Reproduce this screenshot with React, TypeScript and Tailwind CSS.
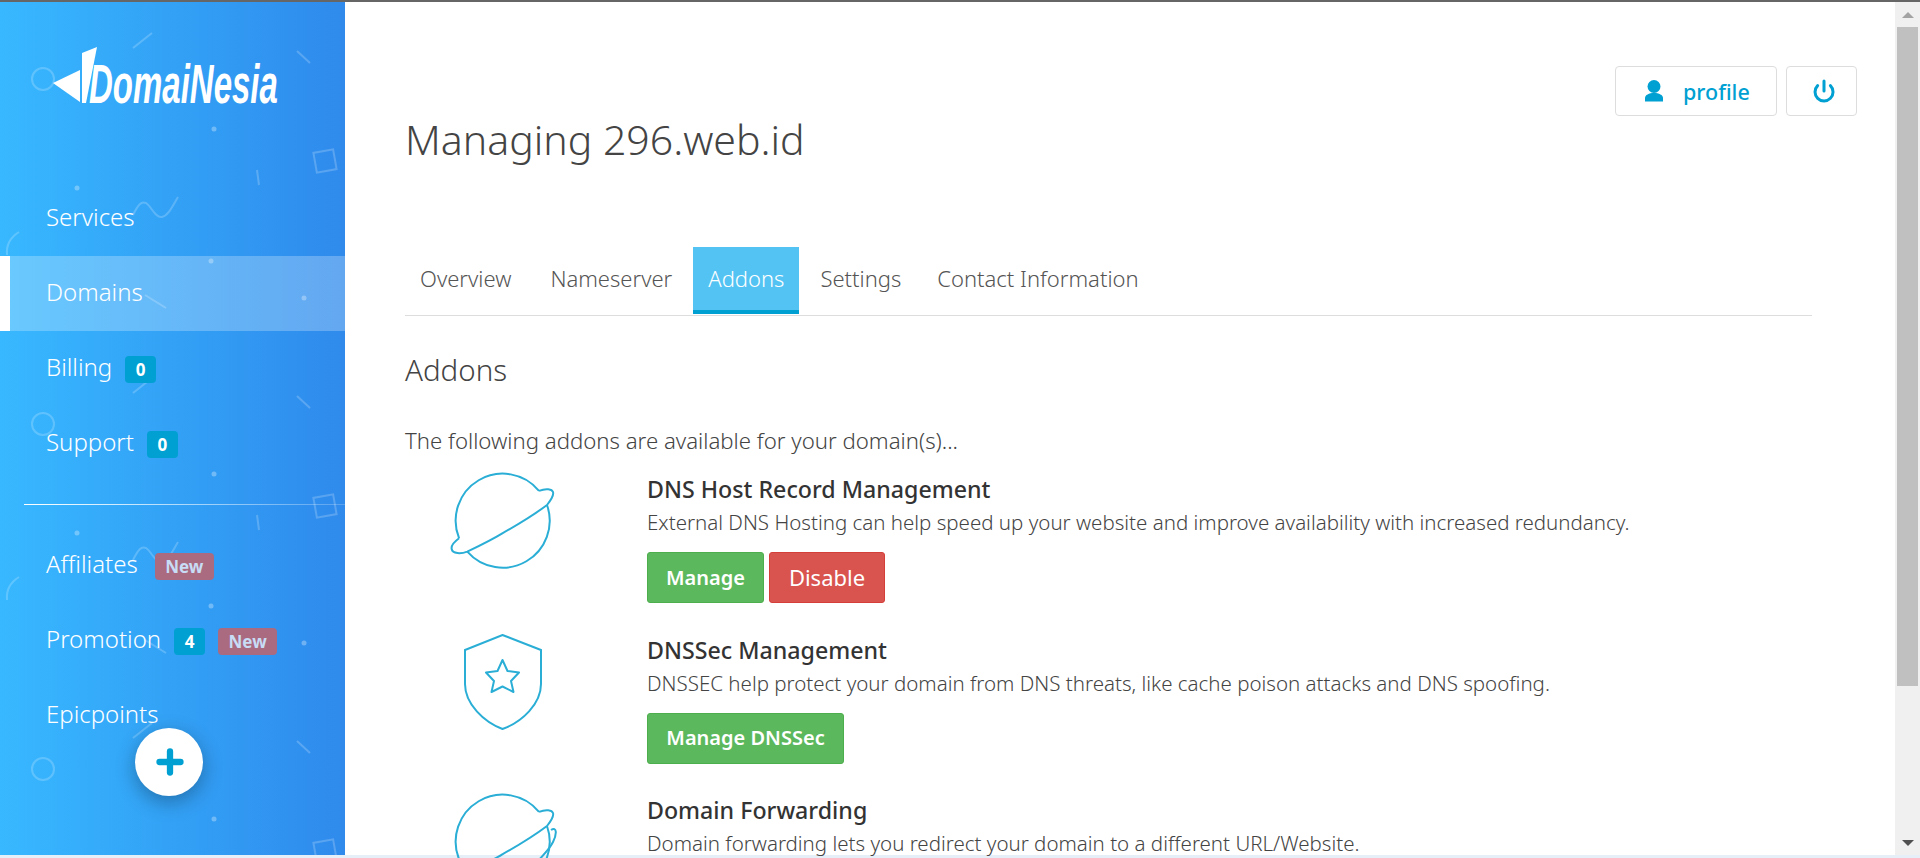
import { Plus, Power } from "lucide-react";

const font = { fontFamily: '"Noto Sans", sans-serif' };

function Badge({ children, red }: { children: string; red?: boolean }) {
  return (
    <span
      className={
        red
          ? "mt-[2px] flex h-[27px] w-[59px] items-center justify-center rounded-[4px] bg-[#aa6a80] text-[17px] font-bold text-[#c8dcf5]"
          : "mt-[2px] flex h-[27px] w-[31px] items-center justify-center rounded-[4px] bg-[#00a0d2] text-[17px] font-bold text-white"
      }
    >
      {children}
    </span>
  );
}

function NavItem({ label, active, badges }: { label: string; active?: boolean; badges?: { t: string; red?: boolean }[] }) {
  return (
    <div
      className={
        active
          ? "flex h-[75px] items-center gap-[13px] border-l-[10px] border-white bg-white/25 pl-[36px] text-[24px] font-light text-white"
          : "flex h-[75px] items-center gap-[13px] pl-[46px] text-[24px] font-light text-white"
      }
    >
      <span className={label === "Affiliates" ? "pb-[4px] pr-[4px]" : "pb-[4px]"}>{label}</span>
      {badges?.map((b) => (
        <Badge key={b.t} red={b.red}>
          {b.t}
        </Badge>
      ))}
    </div>
  );
}

function Decor() {
  return (
    <svg className="absolute inset-0 h-full w-full" aria-hidden="true">
      <defs>
        <pattern id="tile" x="0" y="-2" width="345" height="345" patternUnits="userSpaceOnUse">
          <g fill="none" stroke="#fff" strokeOpacity="0.2" strokeWidth="2">
            <path d="M133 48 152 33M297 51 310 63M257 170 259 185M145 295 166 308" />
            <circle cx="43" cy="79" r="11" />
            <rect x="315" y="151" width="20" height="20" transform="rotate(-10 325 161)" />
            <path d="M133 215C138 205 141 201 146 203 152 207 155 218 162 217 168 216 172 207 178 197" />
            <path d="M7 255C6 245 11 237 19 232" />
          </g>
          <g fill="#fff" fillOpacity="0.3">
            <circle cx="214" cy="129" r="2.5" />
            <circle cx="77" cy="188" r="2.5" />
            <circle cx="211" cy="261" r="2.5" />
            <circle cx="304" cy="298" r="2.5" />
          </g>
        </pattern>
      </defs>
      <rect width="100%" height="100%" fill="url(#tile)" />
    </svg>
  );
}

function Logo() {
  return (
    <svg className="absolute left-[50px] top-[42px] overflow-visible" width="240" height="66" viewBox="50 44 240 66" aria-label="DomaiNesia">
      <path d="M53 83 80 70V102Z" fill="#fff" />
      <path d="M82 53 97 47 86 103H82Z" fill="#fff" />
      <text
        transform="translate(89 103) scale(1 1.69)"
        fontFamily='"Liberation Sans", sans-serif'
        fontWeight="700"
        fontStyle="italic"
        fontSize="33"
        fill="#fff"
      >
        DomaiNesia
      </text>
    </svg>
  );
}

function Planet({ forward }: { forward?: boolean }) {
  return (
    <svg className="overflow-visible" width="104" height="96" viewBox="0 0 104 96" fill="none" stroke="#2aaed6" strokeWidth="2">
      <path d="M88 17.85A47 47 0 0 0 8.1 65.3" />
      <path d="M16.3 78.6A47 47 0 0 0 96 32" />
      <path d="M8.1 65.3C3 69 0 73 .7 76 1.5 81 10 81 16.3 78.6 30 72 42 66 51.3 60.3 68 51 84 41 96 32 100 27 103 22 102 19 101 16 95 15 88 17.85" />
      {forward && <path d="M100 36C106 32 106 40 102 48 98 56 90 64 82 72M58 66 70 67 66 76M70 67 44 82" />}
    </svg>
  );
}

function Shield() {
  return (
    <svg width="78" height="96" viewBox="0 0 78 96" fill="none" stroke="#2aaed6" strokeWidth="2">
      <path d="M38.5 1 77 16V50C77 70 58 88 38.5 95 20 88 1 70 1 50V16Z" />
      <path d="M38.5 26 43.5 37 55 38.5 47 47 49.5 58 38.5 52.5 27.5 58 30 47 22 38.5 33.5 37Z" strokeLinejoin="round" />
    </svg>
  );
}

function Btn({ children, red, w }: { children: string; red?: boolean; w: string }) {
  return (
    <span
      className={
        (red ? "border-[#d43f3a] bg-[#d9534f] text-[22px] font-normal " : "border-[#4cae4c] bg-[#5cb85c] text-[20px] font-semibold ") +
        w +
        " flex h-[51px] items-center justify-center rounded-[3px] border text-white"
      }
    >
      {children}
    </span>
  );
}

function Addon({ icon, title, desc, children }: { icon: React.ReactNode; title: string; desc: string; children?: React.ReactNode }) {
  return (
    <div className="flex h-[160.5px]">
      <div className="flex w-[196px] shrink-0 justify-center">{icon}</div>
      <div className="pl-[46px]">
        <div className="h-[33px] text-[23.2px] font-medium leading-[33px] text-[#333]">{title}</div>
        <div className="h-[30px] whitespace-nowrap text-[20.5px] font-light leading-[33px] text-[#444]">{desc}</div>
        <div className="mt-[16px] flex gap-[5px]">{children}</div>
      </div>
    </div>
  );
}

export default function App() {
  const tabs = ["Overview", "Nameserver", "Addons", "Settings", "Contact Information"];
  return (
    <div className="flex h-[858px] flex-col overflow-hidden bg-white" style={font}>
      <div className="h-[2px] shrink-0 bg-[#666]" />
      <div className="flex min-h-0 flex-1">
        <aside className="relative w-[345px] shrink-0 overflow-hidden bg-gradient-to-r from-[#38b8ff] to-[#2f8aec]">
          <Decor />
          <Logo />
          <div className="relative pt-[179px]">
            <NavItem label="Services" />
            <NavItem label="Domains" active />
            <NavItem label="Billing" badges={[{ t: "0" }]} />
            <NavItem label="Support" badges={[{ t: "0" }]} />
            <div className="ml-[24px] my-[23px] h-px bg-gradient-to-r from-white to-white/20" />
            <NavItem label="Affiliates" badges={[{ t: "New", red: true }]} />
            <NavItem label="Promotion" badges={[{ t: "4" }, { t: "New", red: true }]} />
            <NavItem label="Epicpoints" />
          </div>
          <div className="absolute left-[135px] top-[726px] flex h-[68px] w-[68px] items-center justify-center rounded-full bg-white pl-[2px] shadow-[0_6px_20px_rgba(0,0,0,0.3)]">
            <Plus size={36} strokeWidth={4.2} color="#00a0d2" />
          </div>
        </aside>

        <main className="relative min-w-0 flex-1 pl-[60px] pr-[83px]">
          <div className="absolute right-[38px] top-[64px] flex gap-[9px]">
            <div className="flex h-[50px] w-[162px] items-center gap-[20px] rounded-[4px] border border-[#ddd] pl-[29px] text-[21.5px] font-medium text-[#00a0d2]">
              <svg width="18" height="22" viewBox="0 0 18 22" fill="#00a0d2">
                <circle cx="9" cy="6.5" r="6.5" />
                <path d="M0 21.5V18C0 15 4 13 9 13S18 15 18 18V21.5Z" />
              </svg>
              <span className="pt-[2px]">profile</span>
            </div>
            <div className="flex h-[50px] w-[71px] items-center justify-center rounded-[4px] border border-[#ddd] pl-[4px]">
              <Power size={24} strokeWidth={3} color="#00a0d2" />
            </div>
          </div>

          <h1 className="pt-[108px] text-[41px] font-light leading-[58px] text-[#444]">Managing 296.web.id</h1>

          <div className="mt-[79px] flex h-[69px] gap-[6px] border-b border-[#ddd]">
            {tabs.map((t) => (
              <div
                key={t}
                className={
                  t === "Addons"
                    ? "flex h-[67px] items-center border-b-4 border-[#00a0d2] bg-[#53c3f3] px-[15px] text-[22px] font-light text-white"
                    : t === "Overview"
                      ? "flex h-[67px] items-center pb-[4px] pl-[15px] pr-[18px] text-[22px] font-light text-[#555]"
                      : "flex h-[67px] items-center px-[15px] pb-[4px] text-[22px] font-light text-[#555]"
                }
              >
                {t}
              </div>
            ))}
          </div>

          <h2 className="mt-[35px] text-[29.5px] font-light leading-[38px] text-[#444]">Addons</h2>
          <p className="mt-[36px] text-[22.2px] font-light leading-[32px] text-[#444]">
            The following addons are available for your domain(s)...
          </p>

          <div className="mt-[16px]">
            <Addon
              icon={<Planet />}
              title="DNS Host Record Management"
              desc="External DNS Hosting can help speed up your website and improve availability with increased redundancy."
            >
              <Btn w="w-[117px]">Manage</Btn>
              <Btn red w="w-[116px]">Disable</Btn>
            </Addon>
            <Addon
              icon={<Shield />}
              title="DNSSec Management"
              desc="DNSSEC help protect your domain from DNS threats, like cache poison attacks and DNS spoofing."
            >
              <Btn w="w-[197px]">Manage DNSSec</Btn>
            </Addon>
            <Addon
              icon={<Planet forward />}
              title="Domain Forwarding"
              desc="Domain forwarding lets you redirect your domain to a different URL/Website."
            />
          </div>
        </main>

        <div className="flex w-[25px] shrink-0 flex-col items-center bg-[#f0f0f0] px-[2px]">
          <div className="flex h-[25px] shrink-0 items-center justify-center">
            <div className="h-0 w-0 border-x-[6px] border-b-[6px] border-x-transparent border-b-[#a3a3a3]" />
          </div>
          <div className="h-[659px] w-full shrink-0 bg-[#c0c0c0]" />
          <div className="mt-auto flex h-[25px] items-center justify-center">
            <div className="h-0 w-0 border-x-[6px] border-t-[6px] border-x-transparent border-t-[#505050]" />
          </div>
        </div>
      </div>
      <div className="h-[3px] shrink-0 bg-[#e6eef8]" />
    </div>
  );
}
